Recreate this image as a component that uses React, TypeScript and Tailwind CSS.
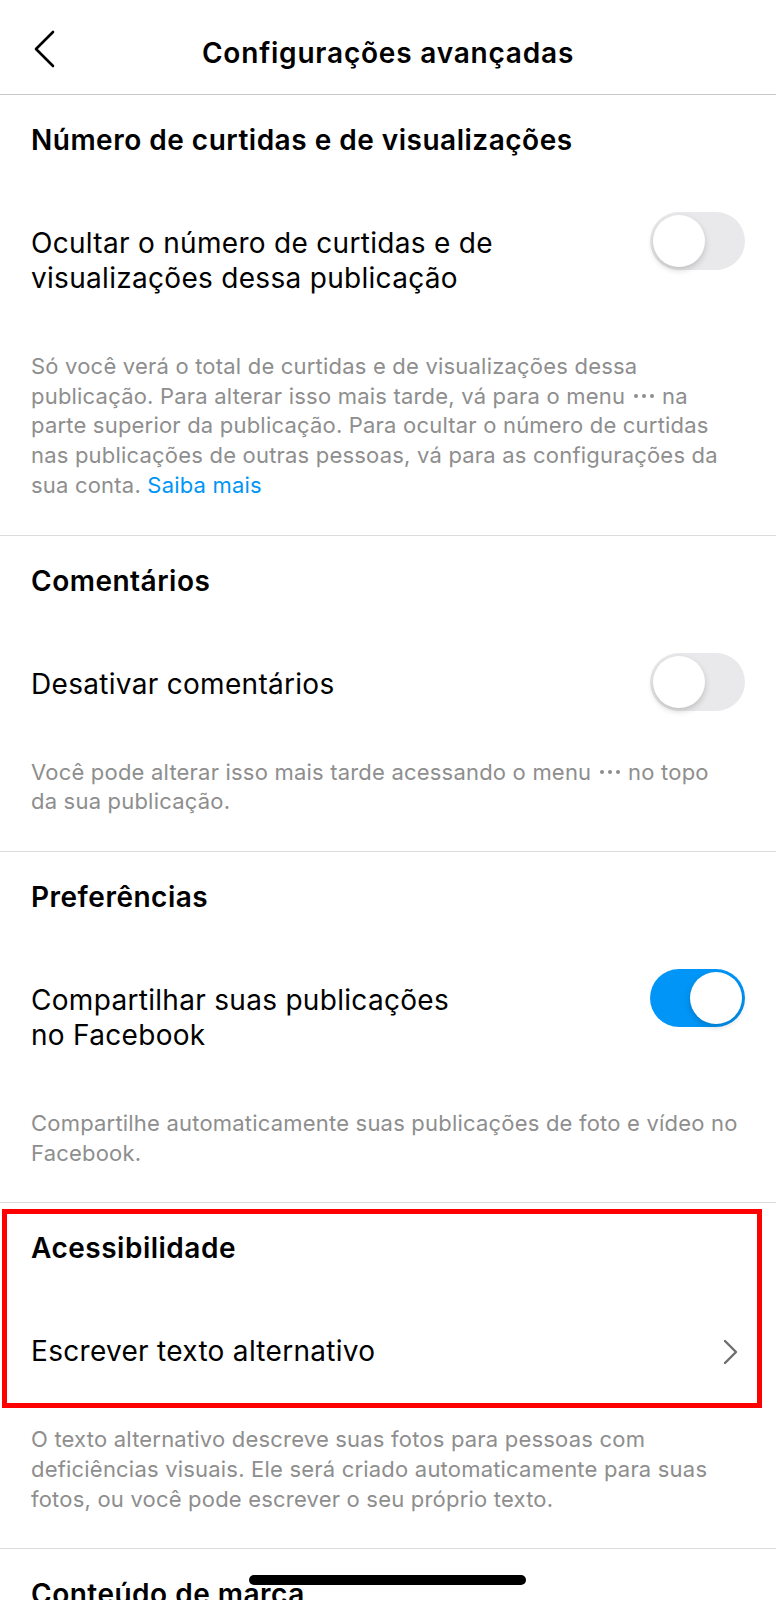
import type { ReactNode } from "react";

const font = { fontFamily: "Inter, 'Noto Sans', sans-serif" };

const Toggle = ({ on }: { on?: boolean }) => {
  return (
    <div
      className={`relative shrink-0 w-[95px] h-[58px] rounded-full -mt-[14px] -mb-[9px] ${
        on ? "bg-[#0095f6]" : "bg-[#e9e9eb]"
      }`}
    >
      <div
        className={`absolute top-[3px] w-[52px] h-[52px] rounded-full bg-white shadow-[0_3px_6px_rgba(0,0,0,0.18)] ${
          on ? "right-[3px]" : "left-[3px]"
        }`}
      />
    </div>
  );
};

const Dots = () => (
  <span className="inline-flex items-center gap-[4px] mx-[2px] align-middle -mt-[3px]">
    <span className="w-[4px] h-[4px] rounded-full bg-[#8e8e8e]" />
    <span className="w-[4px] h-[4px] rounded-full bg-[#8e8e8e]" />
    <span className="w-[4px] h-[4px] rounded-full bg-[#8e8e8e]" />
  </span>
);

const Section = ({
  title,
  row,
  right,
  desc,
  children,
}: {
  title: string;
  row: ReactNode;
  right: ReactNode;
  desc: ReactNode;
  children?: ReactNode;
}) => {
  return (
    <div className="relative border-b border-[#dbdbdb] px-[31px] pt-[28px] pb-[34px]">
      {children}
      <h2 className="text-[28px] leading-[34px] font-semibold tracking-[0.5px] text-black">{title}</h2>
      <div className="mt-[69px] flex items-start justify-between">
        <div className="text-[28px] leading-[35px] tracking-[0.3px] text-black">{row}</div>
        {right}
      </div>
      <p className="mt-[56px] text-[22px] leading-[29.7px] tracking-[0.2px] text-[#8e8e8e] whitespace-nowrap">
        {desc}
      </p>
    </div>
  );
};

export default function App() {
  return (
    <div className="w-[776px] h-[1600px] overflow-hidden bg-white relative" style={font}>
      {/* Header */}
      <div className="relative h-[95px] pt-[11px] border-b border-[#c8c8c8] flex items-center justify-center">
        <svg
          className="absolute left-[30px] top-[29px]"
          width="28"
          height="40"
          viewBox="0 0 28 40"
          fill="none"
          stroke="black"
          strokeWidth="2.6"
          strokeLinecap="round"
          strokeLinejoin="round"
        >
          <path d="M23 3 L6 20 L23 37" />
        </svg>
        <h1 className="text-[28px] font-semibold tracking-[0.8px] text-black">Configurações avançadas</h1>
      </div>

      <Section
        title="Número de curtidas e de visualizações"
        row={
          <>
            Ocultar o número de curtidas e de
            <br />
            visualizações dessa publicação
          </>
        }
        right={<Toggle />}
        desc={
          <>
            Só você verá o total de curtidas e de visualizações dessa
            <br />
            publicação. Para alterar isso mais tarde, vá para o menu <Dots /> na
            <br />
            parte superior da publicação. Para ocultar o número de curtidas
            <br />
            nas publicações de outras pessoas, vá para as configurações da
            <br />
            sua conta. <span className="text-[#0095f6]">Saiba mais</span>
          </>
        }
      />

      <Section
        title="Comentários"
        row="Desativar comentários"
        right={<Toggle />}
        desc={
          <>
            Você pode alterar isso mais tarde acessando o menu <Dots /> no topo
            <br />
            da sua publicação.
          </>
        }
      />

      <Section
        title="Preferências"
        row={
          <>
            Compartilhar suas publicações
            <br />
            no Facebook
          </>
        }
        right={<Toggle on />}
        desc={
          <>
            Compartilhe automaticamente suas publicações de foto e vídeo no
            <br />
            Facebook.
          </>
        }
      />

      <Section
        title="Acessibilidade"
        row="Escrever texto alternativo"
        right={
          <svg
            className="mr-[7px] mt-[5px]"
            width="15"
            height="26"
            viewBox="0 0 15 26"
            fill="none"
            stroke="#6e6e6e"
            strokeWidth="2.4"
            strokeLinecap="round"
            strokeLinejoin="round"
          >
            <path d="M2 2 L13 13 L2 24" />
          </svg>
        }
        desc={
          <>
            O texto alternativo descreve suas fotos para pessoas com
            <br />
            deficiências visuais. Ele será criado automaticamente para suas
            <br />
            fotos, ou você pode escrever o seu próprio texto.
          </>
        }
      >
        {/* highlight annotation */}
        <div className="pointer-events-none absolute left-[2px] top-[6px] w-[760px] h-[199px] border-[5px] border-[#ff0000]" />
      </Section>

      <div className="px-[31px] pt-[28px]">
        <h2 className="text-[28px] leading-[34px] font-semibold tracking-[0.5px] text-black">
          Conteúdo de marca
        </h2>
      </div>

      {/* home indicator */}
      <div className="absolute left-[249px] top-[1575px] w-[277px] h-[10px] rounded-full bg-black" />
    </div>
  );
}
